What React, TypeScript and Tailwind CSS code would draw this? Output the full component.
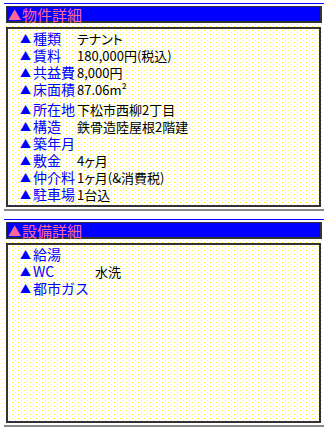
// 1px yellow dots on white, offset every other row
const DOTS =
  "bg-white [background-image:conic-gradient(from_270deg_at_1px_1px,#ffff00_90deg,transparent_0),conic-gradient(from_270deg_at_1px_1px,#ffff00_90deg,transparent_0)] [background-size:6px_4px] [background-position:0_0,3px_2px]";

type Row = { label: string; value?: string; gapAfter?: boolean };

const BUKKEN: Row[] = [
  { label: "種類", value: "テナント" },
  { label: "賃料", value: "180,000円(税込)" },
  { label: "共益費", value: "8,000円" },
  { label: "床面積", value: "87.06m²", gapAfter: true },
  { label: "所在地", value: "下松市西柳2丁目" },
  { label: "構造", value: "鉄骨造陸屋根2階建" },
  { label: "築年月" },
  { label: "敷金", value: "4ヶ月" },
  { label: "仲介料", value: "1ヶ月(&消費税)" },
  { label: "駐車場", value: "1台込" },
];

const SETSUBI: Row[] = [
  { label: "給湯" },
  { label: "WC", value: "水洗" },
  { label: "都市ガス" },
];

function Section({
  title,
  rows,
  labelClass,
}: {
  title: string;
  rows: Row[];
  labelClass: string;
}) {
  return (
    <section className="h-[213px]">
      <div className="ml-[4px] mt-[3px] h-px bg-[#0000ff]" />
      <div className={`ml-[6px] mt-[2px] pb-px ${DOTS}`}>
        <h2 className="mr-[2px] flex h-[17px] items-center gap-[1px] border border-b-2 border-r-2 border-[#333] bg-[#0000ff] pl-[1px] text-[15px] leading-none text-[#ff6699]">
          <span className="text-[13px]">▲</span>
          <span>{title}</span>
        </h2>
        <div className="mr-[3px] mt-[4px] h-[180px] border-2 border-[#333] pl-[12px] pt-px">
          {rows.map((r) => (
            <div key={r.label} className={`flex h-[17px] items-center leading-[17px] ${r.gapAfter ? "mb-[3px]" : ""}`}>
              <div className={`flex shrink-0 items-center text-[14px] text-[#0000ff] ${labelClass}`}>
                <span className="w-[13px] text-[11px] leading-none">▲</span>
                <span>{r.label}</span>
              </div>
              {r.value && <div className="text-[13px] text-black [font-feature-settings:'palt']">{r.value}</div>}
            </div>
          ))}
        </div>
      </div>
      <div className="ml-[4px] mt-px h-[2px] bg-[#888]" />
    </section>
  );
}

export default function App() {
  return (
    <div className="h-[427px] w-[324px] overflow-hidden bg-white font-['Noto_Sans_CJK_JP',sans-serif]">
      <Section title="物件詳細" rows={BUKKEN} labelClass="w-[57px]" />
      <Section title="設備詳細" rows={SETSUBI} labelClass="w-[75px]" />
    </div>
  );
}
